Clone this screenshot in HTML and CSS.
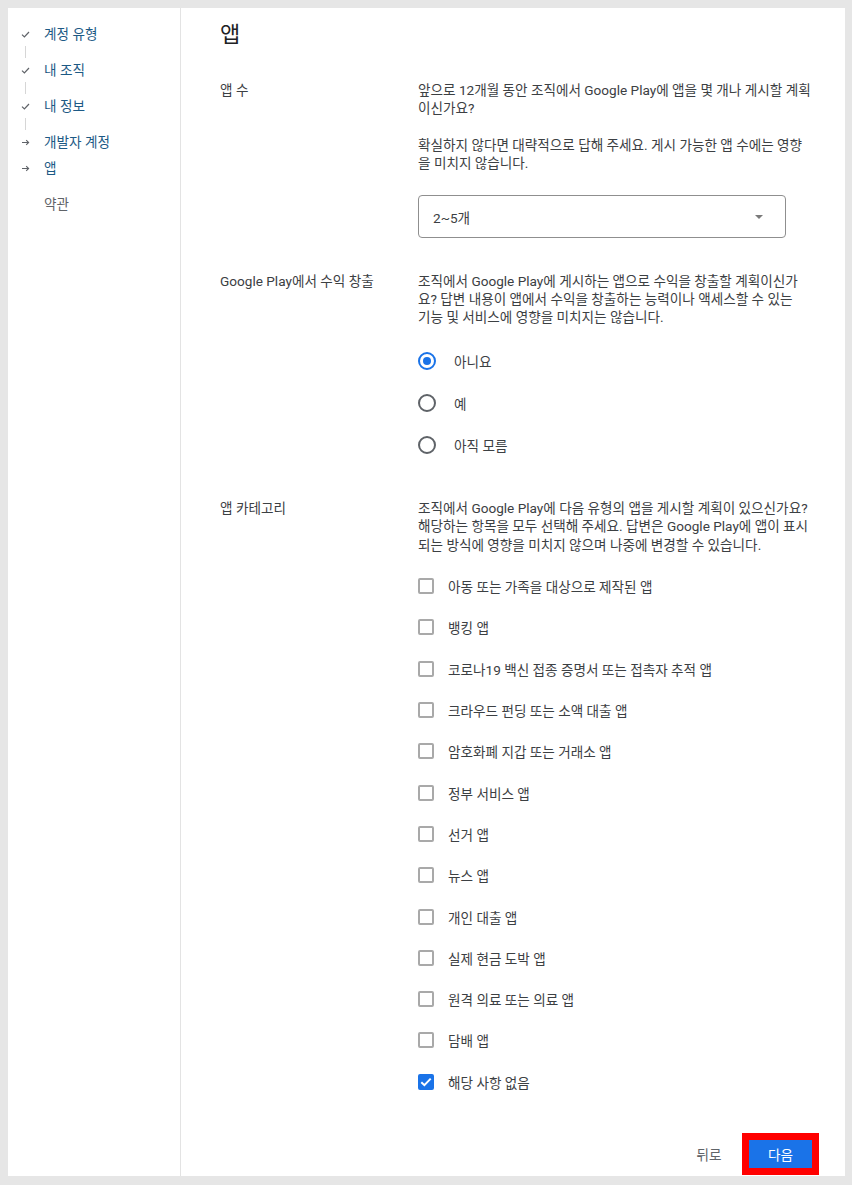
FILE: index.html
```html
<!DOCTYPE html>
<html lang="ko">
<head>
<meta charset="utf-8">
<title>앱</title>
<link rel="stylesheet" href="styles.css">
</head>
<body>
<div class="frame">
  <nav class="sidebar">
    <div class="step done">
      <span class="step-icon"><svg width="9" height="7" viewBox="0 0 9 7"><path d="M1 3.6 L3.4 6 L8 1" fill="none" stroke="#5f6368" stroke-width="1.2"/></svg></span>
      <span class="step-text">계정 유형</span>
    </div>
    <div class="connector"><span class="connector-line"></span></div>
    <div class="step done">
      <span class="step-icon"><svg width="9" height="7" viewBox="0 0 9 7"><path d="M1 3.6 L3.4 6 L8 1" fill="none" stroke="#5f6368" stroke-width="1.2"/></svg></span>
      <span class="step-text">내 조직</span>
    </div>
    <div class="connector"><span class="connector-line"></span></div>
    <div class="step done">
      <span class="step-icon"><svg width="9" height="7" viewBox="0 0 9 7"><path d="M1 3.6 L3.4 6 L8 1" fill="none" stroke="#5f6368" stroke-width="1.2"/></svg></span>
      <span class="step-text">내 정보</span>
    </div>
    <div class="connector"><span class="connector-line"></span></div>
    <div class="step current">
      <span class="step-icon"><svg width="9" height="7" viewBox="0 0 9 7"><path d="M1 3.5 H7.6 M5.2 1.2 L7.6 3.5 L5.2 5.8" fill="none" stroke="#5f6368" stroke-width="1.1"/></svg></span>
      <span class="step-text">개발자 계정</span>
    </div>
    <div class="step current tight">
      <span class="step-icon"><svg width="9" height="7" viewBox="0 0 9 7"><path d="M1 3.5 H7.6 M5.2 1.2 L7.6 3.5 L5.2 5.8" fill="none" stroke="#5f6368" stroke-width="1.1"/></svg></span>
      <span class="step-text">앱</span>
    </div>
    <div class="step todo loose">
      <span class="step-icon"></span>
      <span class="step-text">약관</span>
    </div>
  </nav>

  <main class="main">
    <h1 class="title">앱</h1>

    <section class="row row-first">
      <div class="label">앱 수</div>
      <div class="field">
        <p class="desc">앞으로 12개월 동안 조직에서 Google Play에 앱을 몇 개나 게시할 계획이신가요?</p>
        <p class="desc">확실하지 않다면 대략적으로 답해 주세요. 게시 가능한 앱 수에는 영향을 미치지 않습니다.</p>
        <div class="select">
          <span class="select-value">2~5개</span>
          <span class="caret"></span>
        </div>
      </div>
    </section>

    <section class="row row-mid">
      <div class="label">Google Play에서 수익 창출</div>
      <div class="field">
        <p class="desc">조직에서 Google Play에 게시하는 앱으로 수익을 창출할 계획이신가요? 답변 내용이 앱에서 수익을 창출하는 능력이나 액세스할 수 있는 <span class="nobr">기능</span> 및 서비스에 영향을 미치지는 않습니다.</p>
        <div class="radios">
          <div class="radio-row"><span class="radio checked"></span><span class="opt">아니요</span></div>
          <div class="radio-row"><span class="radio"></span><span class="opt">예</span></div>
          <div class="radio-row"><span class="radio"></span><span class="opt">아직 모름</span></div>
        </div>
      </div>
    </section>

    <section class="row row-last">
      <div class="label">앱 카테고리</div>
      <div class="field">
        <p class="desc">조직에서 Google Play에 다음 유형의 앱을 게시할 계획이 있으신가요? 해당하는 항목을 모두 선택해 주세요. 답변은 Google Play에 앱이 표시되는 방식에 영향을 미치지 않으며 나중에 변경할 수 있습니다.</p>
        <div class="checks">
          <div class="check-row"><span class="box"></span><span class="opt">아동 또는 가족을 대상으로 제작된 앱</span></div>
          <div class="check-row"><span class="box"></span><span class="opt">뱅킹 앱</span></div>
          <div class="check-row"><span class="box"></span><span class="opt">코로나19 백신 접종 증명서 또는 접촉자 추적 앱</span></div>
          <div class="check-row"><span class="box"></span><span class="opt">크라우드 펀딩 또는 소액 대출 앱</span></div>
          <div class="check-row"><span class="box"></span><span class="opt">암호화폐 지갑 또는 거래소 앱</span></div>
          <div class="check-row"><span class="box"></span><span class="opt">정부 서비스 앱</span></div>
          <div class="check-row"><span class="box"></span><span class="opt">선거 앱</span></div>
          <div class="check-row"><span class="box"></span><span class="opt">뉴스 앱</span></div>
          <div class="check-row"><span class="box"></span><span class="opt">개인 대출 앱</span></div>
          <div class="check-row"><span class="box"></span><span class="opt">실제 현금 도박 앱</span></div>
          <div class="check-row"><span class="box"></span><span class="opt">원격 의료 또는 의료 앱</span></div>
          <div class="check-row"><span class="box"></span><span class="opt">담배 앱</span></div>
          <div class="check-row"><span class="box checked"><svg width="12" height="10" viewBox="0 0 12 10"><path d="M1.3 5.2 L4.4 8.2 L10.7 1.6" fill="none" stroke="#fff" stroke-width="2"/></svg></span><span class="opt">해당 사항 없음</span></div>
        </div>
      </div>
    </section>

    <div class="actions">
      <button class="btn-back" type="button">뒤로</button>
      <button class="btn-next" type="button">다음</button>
    </div>
  </main>
</div>
</body>
</html>
```

FILE: styles.css
```css
* { box-sizing: border-box; }

html, body {
  margin: 0;
  padding: 0;
}

body {
  background: #e6e6e6;
  font-family: "Roboto", "Noto Sans CJK KR", sans-serif;
  font-size: 13.6px;
  color: #3c4043;
}

.frame {
  margin: 8px 7px 9px 8px;
  height: 1168px;
  background: #ffffff;
  display: flex;
}

/* Sidebar */
.sidebar {
  width: 173px;
  flex: 0 0 173px;
  border-right: 1px solid #e3e3e3;
  padding: 17px 0 0 13px;
}

.step {
  display: flex;
  align-items: center;
  height: 18px;
  line-height: 18px;
}

.step.tight { margin-top: 8px; }
.step.loose { margin-top: 18px; }

.step-icon {
  width: 9px;
  flex: 0 0 9px;
  display: flex;
  align-items: center;
  justify-content: center;
}

.step-text {
  margin-left: 14px;
  color: #1d5a85;
}

.step.todo .step-text { color: #5f6368; }

.connector {
  height: 18px;
  padding: 3px 0;
  display: flex;
}

.connector-line {
  display: block;
  width: 1px;
  margin-left: 4px;
  background: #d6d6d6;
}

/* Main */
.main {
  flex: 1;
  padding: 12px 33px 0 39px;
}

.title {
  margin: 0;
  font-size: 22px;
  line-height: 30px;
  font-weight: 400;
  color: #202124;
}

.row {
  display: grid;
  grid-template-columns: 198px 1fr;
}

.row-first { margin-top: 31px; }
.row-mid { margin-top: 34px; }
.row-last { margin-top: 33px; }

.label {
  line-height: 18px;
  color: #3c4043;
}

.desc {
  margin: 0 0 19px;
  max-width: 398px;
  line-height: 18px;
  color: #3c4043;
}

.nobr { white-space: nowrap; }

.row-mid .desc, .row-last .desc { margin-bottom: 0; }

.row-last .desc { line-height: 18.4px; }

.select {
  margin-top: 23px;
  width: 368px;
  height: 43px;
  border: 1px solid #8f8f8f;
  border-radius: 4px;
  display: flex;
  align-items: center;
  justify-content: space-between;
  padding: 0 22px 0 14px;
}

.select-value { color: #3c4043; }

.caret {
  width: 0;
  height: 0;
  border-left: 4.5px solid transparent;
  border-right: 4.5px solid transparent;
  border-top: 4.5px solid #7a7a7a;
}

/* Radios */
.radios { margin-top: 14px; }

.radio-row {
  height: 42px;
  display: flex;
  align-items: center;
}

.radio {
  width: 18px;
  height: 18px;
  flex: 0 0 18px;
  border: 2px solid #5f6368;
  border-radius: 50%;
  display: flex;
  align-items: center;
  justify-content: center;
}

.radio.checked { border-color: #1a73e8; }

.radio.checked::after {
  content: "";
  width: 8px;
  height: 8px;
  border-radius: 50%;
  background: #1a73e8;
}

.radio-row .opt { margin-left: 18px; }

/* Checkboxes */
.checks { margin-top: 11px; }

.check-row {
  height: 41.33px;
  display: flex;
  align-items: center;
}

.box {
  width: 16px;
  height: 16px;
  flex: 0 0 16px;
  border: 2px solid #a9a9a9;
  border-radius: 2px;
  display: flex;
  align-items: center;
  justify-content: center;
}

.box.checked {
  background: #1a73e8;
  border-color: #1a73e8;
}

.check-row .opt { margin-left: 14px; }

.opt { color: #3c4043; }

/* Actions */
.actions {
  margin-top: 38px;
  display: flex;
  justify-content: flex-end;
  align-items: center;
  gap: 15px;
}

.btn-back,
.btn-next {
  font-family: "Roboto", "Noto Sans CJK KR", sans-serif;
  font-size: 13.6px;
  border: 0;
  height: 28px;
  padding: 0;
  cursor: pointer;
}

.btn-back {
  background: transparent;
  color: #5f6368;
  width: 50px;
}

.btn-next {
  width: 63px;
  background: #1a73e8;
  color: #ffffff;
  outline: 7px solid #ff0000;
}
```
